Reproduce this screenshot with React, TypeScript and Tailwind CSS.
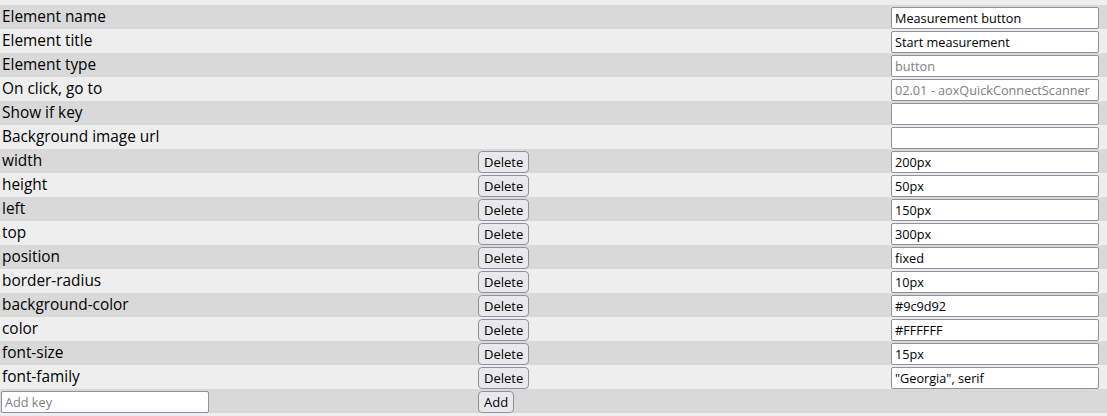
import React from 'react';

type Row = {
  label: string;
  value: string;
  muted?: boolean;
  deletable?: boolean;
};

const rows: Row[] = [
  { label: 'Element name', value: 'Measurement button' },
  { label: 'Element title', value: 'Start measurement' },
  { label: 'Element type', value: 'button', muted: true },
  { label: 'On click, go to', value: '02.01 - aoxQuickConnectScanner', muted: true },
  { label: 'Show if key', value: '' },
  { label: 'Background image url', value: '' },
  { label: 'width', value: '200px', deletable: true },
  { label: 'height', value: '50px', deletable: true },
  { label: 'left', value: '150px', deletable: true },
  { label: 'top', value: '300px', deletable: true },
  { label: 'position', value: 'fixed', deletable: true },
  { label: 'border-radius', value: '10px', deletable: true },
  { label: 'background-color', value: '#9c9d92', deletable: true },
  { label: 'color', value: '#FFFFFF', deletable: true },
  { label: 'font-size', value: '15px', deletable: true },
  { label: 'font-family', value: '"Georgia", serif', deletable: true },
];

const inputCls =
  'h-[22px] w-[208px] rounded-[2px] border border-[#8f8f9d] bg-white px-[3px] text-[12.7px] leading-[20px] outline-none';

const buttonCls =
  'h-[22px] rounded-[4px] border border-[#8f8f9d] bg-[#e9e9ed] px-[5px] text-[13px] leading-[18px] text-black';

export default function App() {
  return (
    <div className="min-h-[416px] bg-[#eeeeee] pt-[5px] text-black" style={{ fontFamily: '"Open Sans", "Noto Sans", sans-serif' }}>
      {rows.map((row, i) => (
        <div
          key={row.label}
          className={`grid h-[24px] grid-cols-[477px_413px_1fr] items-center ${
            i % 2 === 0 ? 'bg-[#d9d9d9]' : 'bg-[#eeeeee]'
          }`}
        >
          <div className="pb-[1px] pl-[2px] text-[15.4px] leading-[23px]">{row.label}</div>
          <div className="pl-[1px]">
            {row.deletable && <button type="button" className={buttonCls}>Delete</button>}
          </div>
          <div className="pl-[1px]">
            <input
              readOnly
              value={row.value}
              className={`${inputCls} ${row.muted ? 'text-[#808080]' : 'text-black'}`}
            />
          </div>
        </div>
      ))}
      <div className="grid h-[24px] grid-cols-[477px_413px_1fr] items-center bg-[#d9d9d9]">
        <div className="pl-[1px]">
          <input placeholder="Add key" className={`${inputCls} placeholder:text-[#808080]`} />
        </div>
        <div className="pl-[1px]">
          <button type="button" className={buttonCls}>Add</button>
        </div>
        <div />
      </div>
    </div>
  );
}
